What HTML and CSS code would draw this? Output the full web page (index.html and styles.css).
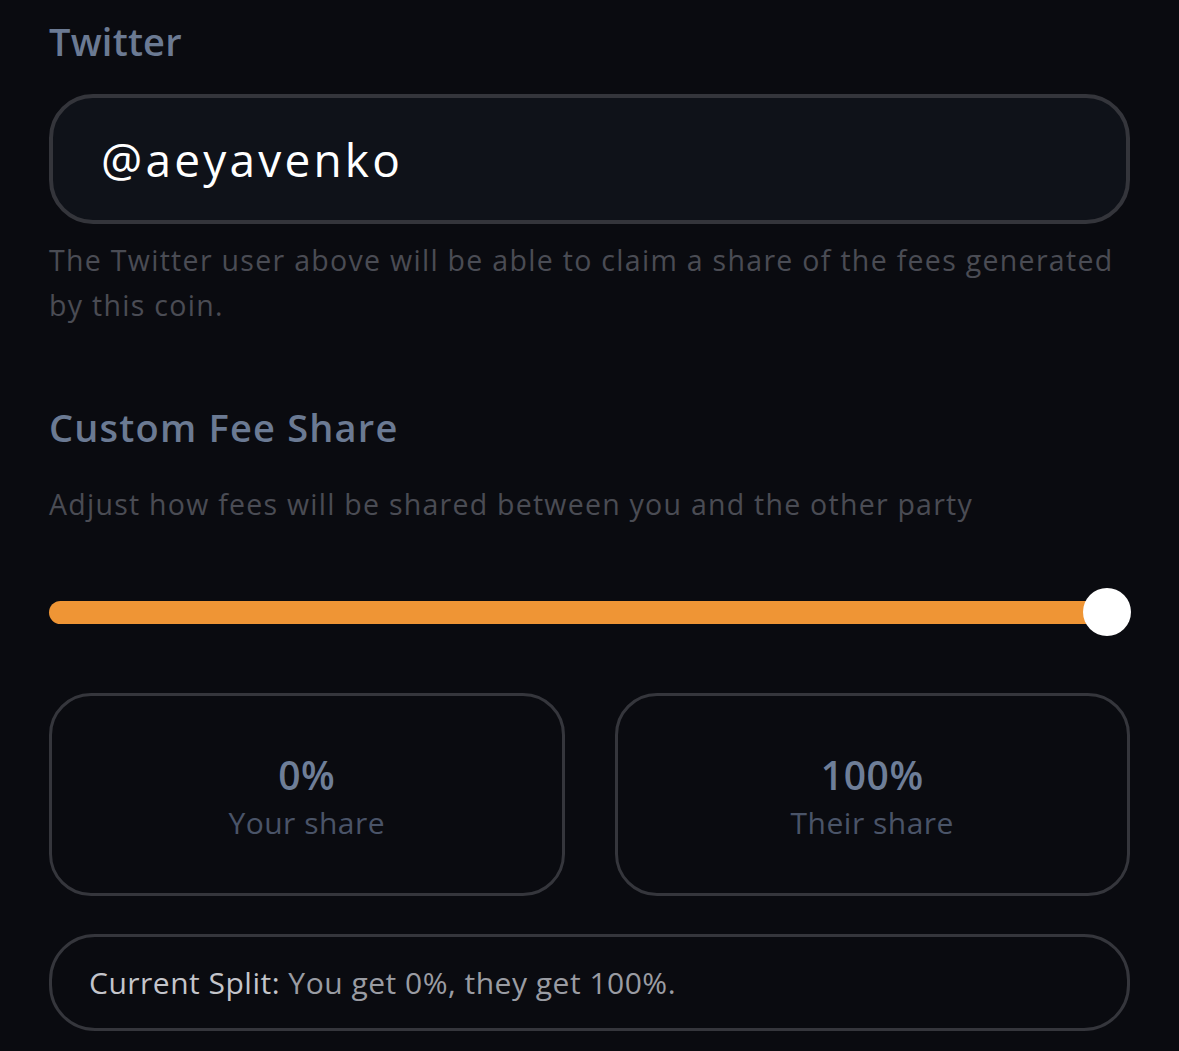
FILE: index.html
```html
<!DOCTYPE html>
<html lang="en">
<head>
<meta charset="utf-8">
<title>Fee Share</title>
<link rel="stylesheet" href="styles.css">
</head>
<body>
<main class="form">
  <section class="field">
    <h2 class="label">Twitter</h2>
    <div class="input">@aeyavenko</div>
    <p class="help">The Twitter user above will be able to claim a share of the fees generated by this coin.</p>
  </section>

  <section class="fee">
    <h2 class="label">Custom Fee Share</h2>
    <p class="desc">Adjust how fees will be shared between you and the other party</p>
    <div class="slider">
      <div class="track"></div>
      <div class="thumb"></div>
    </div>
    <div class="cards">
      <div class="card">
        <div class="pct">0%</div>
        <div class="who">Your share</div>
      </div>
      <div class="card">
        <div class="pct">100%</div>
        <div class="who">Their share</div>
      </div>
    </div>
    <div class="split"><span class="split-key">Current Split:</span> You get 0%, they get 100%.</div>
  </section>
</main>
</body>
</html>
```

FILE: styles.css
```css
html, body {
  margin: 0;
  padding: 0;
  background: #0a0b10;
}
body {
  font-family: "Open Sans", "Noto Sans", sans-serif;
  width: 1179px;
  height: 1051px;
  overflow: hidden;
}
.form {
  padding: 14px 49px 0 49px;
  width: 1081px;
}
.label {
  margin: 0;
  font-size: 38px;
  font-weight: 600;
  line-height: 54px;
  color: #6b7a93;
  letter-spacing: 0.2px;
}
.fee .label {
  letter-spacing: 1.2px;
}
.input {
  margin-top: 26px;
  height: 130px;
  box-sizing: border-box;
  border: 4px solid #34353b;
  border-radius: 44px;
  background: #0f1219;
  color: #ffffff;
  font-size: 46px;
  line-height: 122px;
  padding-left: 48px;
  letter-spacing: 3.2px;
}
.help {
  margin: 14px 0 0 0;
  font-size: 28.5px;
  line-height: 45px;
  color: #4a4c54;
  letter-spacing: 1.3px;
}
.fee {
  margin-top: 72px;
}
.desc {
  margin: 30px 0 0 0;
  font-size: 28.5px;
  line-height: 40px;
  color: #4a4c54;
  letter-spacing: 1.25px;
}
.slider {
  position: relative;
  margin-top: 64px;
  height: 48px;
  display: flex;
  align-items: center;
}
.track {
  width: 1060px;
  height: 23px;
  border-radius: 12px;
  background: #ef9535;
}
.thumb {
  position: absolute;
  left: 1034px;
  top: 0;
  width: 48px;
  height: 48px;
  border-radius: 50%;
  background: #ffffff;
}
.thumb::before {
  content: "";
  position: absolute;
  left: -16px;
  top: -6px;
  width: 80px;
  height: 80px;
  border-radius: 50%;
  background: #0e1016;
  z-index: -1;
}
.cards {
  margin-top: 57px;
  display: grid;
  grid-template-columns: 1fr 1fr;
  gap: 50px;
}
.card {
  height: 203px;
  box-sizing: border-box;
  border: 3px solid #35363c;
  border-radius: 42px;
  display: flex;
  flex-direction: column;
  align-items: center;
  justify-content: center;
  padding-top: 8px;
}
.pct {
  font-size: 39px;
  font-weight: 600;
  line-height: 48px;
  color: #6e7e98;
  letter-spacing: 0.6px;
}
.who {
  font-size: 30px;
  line-height: 48px;
  color: #4a5468;
  letter-spacing: 0.5px;
}
.split {
  margin-top: 38px;
  height: 97px;
  box-sizing: border-box;
  border: 3px solid #35363c;
  border-radius: 46px;
  padding-left: 37px;
  font-size: 30px;
  line-height: 91px;
  color: #9a9ca3;
  letter-spacing: 0.5px;
}
.split-key {
  color: #c4c5cb;
  font-weight: 500;
}
```
